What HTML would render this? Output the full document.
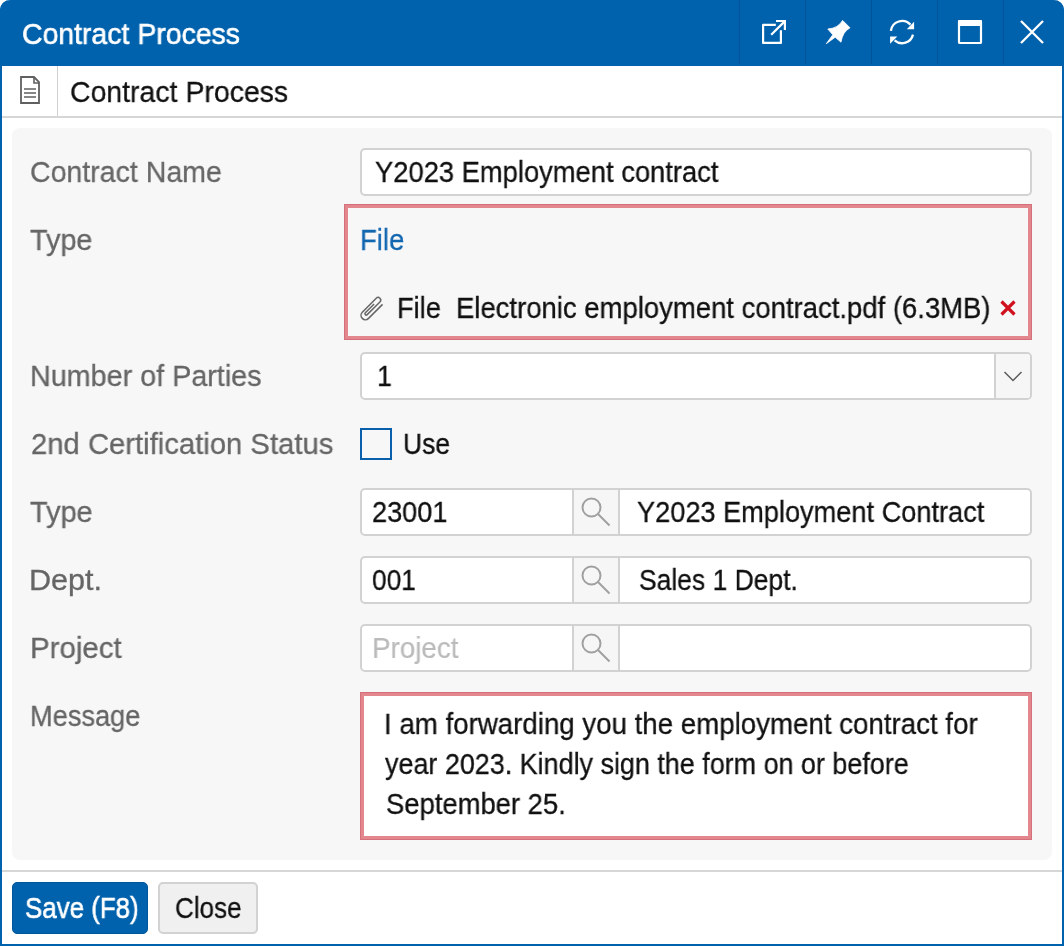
<!DOCTYPE html>
<html><head><meta charset="utf-8">
<style>
html,body{margin:0;padding:0;width:1064px;height:946px;overflow:hidden;background:#fff;}
body{font-family:"Liberation Sans",sans-serif;position:relative;}
.win{position:absolute;left:0;top:0;width:1060px;height:944px;border:2px solid #0062ad;border-top:0;border-radius:10px 10px 0 0;background:#fff;}
.hdr{position:absolute;left:0;top:0;width:1064px;height:66px;background:#0062ad;border-radius:10px 10px 0 0;}
.sep{position:absolute;top:0;width:1.5px;height:64px;background:#00559a;}
.t{position:absolute;white-space:pre;font-size:30px;line-height:40px;height:40px;transform-origin:0 0;will-change:transform;}
.lbl{color:#666;-webkit-text-stroke:0.3px #666;}
.val{color:#111;-webkit-text-stroke:0.3px #111;}
.box{position:absolute;box-sizing:border-box;border:2px solid #d2d2d2;border-radius:5px;background:#fff;}
.pink{position:absolute;box-sizing:border-box;border:4px solid #e3868e;outline:1px solid #d4707b;outline-offset:-1px;}
.panel{position:absolute;left:12px;top:128px;width:1040px;height:732px;background:#f7f7f7;border-radius:8px;}
.vl{position:absolute;background:#d2d2d2;}
svg{position:absolute;overflow:visible;}
</style></head>
<body>
<div class="win"></div>
<div class="hdr"></div>
<div class="sep" style="left:738.5px"></div>
<div class="sep" style="left:804.5px"></div>
<div class="sep" style="left:870.5px"></div>
<div class="sep" style="left:936.5px"></div>
<div class="sep" style="left:1002.5px"></div>
<div id="hdrt" class="t" style="-webkit-text-stroke:0.6px #fff;left:22.05px;top:14px;color:#fff;transform:scaleX(0.9474);">Contract Process</div>

<!-- header icons -->
<svg style="left:0;top:0" width="1064" height="66">
  <g fill="none" stroke="#fff" stroke-width="2.2" stroke-linejoin="round">
    <path d="M775.8 24.9 H763.1 V42.9 H780.9 V30.3"/>
    <path d="M771.2 34.8 L784.4 21.6"/>
  </g>
  <path d="M776 21 H784.9 V30" fill="none" stroke="#fff" stroke-width="2.2"/>
  <path fill="#fff" stroke="#fff" stroke-width="0.8" stroke-linejoin="round" d="M842.6 20.4 L850 27.8 Q842.6 31.8 841 42.2 L835.2 37.2 L826.3 43.7 L832.8 34.8 L827.8 29 Q838.2 28.2 842.6 20.4 Z"/>
  <g fill="none" stroke="#fff" stroke-width="2.3">
    <path d="M890.9 30.8 A11.3 11.3 0 0 1 910.4 24.6"/>
    <path d="M913 34.6 A11.3 11.3 0 0 1 894.6 40.4"/>
  </g>
  <path fill="#fff" d="M906.8 29.2 H914.1 V21.8 Z M890.1 36.4 H897.3 L890.1 43.8 Z"/>
  <rect x="959" y="21" width="22" height="22" rx="0.8" fill="none" stroke="#fff" stroke-width="2.2"/>
  <rect x="958" y="20" width="24" height="6" rx="1" fill="#fff"/>
  <path d="M1021 21 L1043 43 M1043 21 L1021 43" stroke="#fff" stroke-width="2.3"/>
</svg>

<!-- second row -->
<div class="vl" style="left:56.5px;top:66px;width:1.5px;height:51px;background:#d0d0d0"></div>
<div class="vl" style="left:2px;top:116px;width:1060px;height:2px;background:#d6d6d6"></div>
<svg style="left:0;top:0" width="80" height="120">
  <path d="M21 77 H34 L39 82 V103 H21 Z" fill="none" stroke="#606060" stroke-width="1.8"/>
  <path d="M34 77 V83 H39" fill="none" stroke="#606060" stroke-width="1.6"/>
  <path d="M24 89 H36 M24 93 H36 M24 97 H36" stroke="#606060" stroke-width="1.6"/>
</svg>
<div id="sub" class="t val" style="left:70.05px;top:72px;transform:scaleX(0.9482);">Contract Process</div>

<div class="panel"></div>

<!-- labels -->
<div id="l1" class="t lbl" style="left:30.45px;top:152px;transform:scaleX(0.9510);">Contract Name</div>
<div id="l2" class="t lbl" style="left:30.34px;top:220px;transform:scaleX(0.9603);">Type</div>
<div id="l3" class="t lbl" style="left:29.58px;top:356px;transform:scaleX(0.9577);">Number of Parties</div>
<div id="l4" class="t lbl" style="left:30.53px;top:424px;transform:scaleX(0.9747);">2nd Certification Status</div>
<div id="l5" class="t lbl" style="left:30.14px;top:492px;transform:scaleX(0.9635);">Type</div>
<div id="l6" class="t lbl" style="left:29.46px;top:560px;transform:scaleX(1.0194);">Dept.</div>
<div id="l7" class="t lbl" style="left:29.54px;top:628px;transform:scaleX(0.9824);">Project</div>
<div id="l8" class="t lbl" style="left:29.69px;top:696px;transform:scaleX(0.9067);">Message</div>

<!-- contract name -->
<div class="box" style="left:360px;top:148px;width:672px;height:48px;"></div>
<div id="v1" class="t val" style="left:375.29px;top:152px;transform:scaleX(0.9114);">Y2023 Employment contract</div>

<!-- type file -->
<div class="pink" style="left:344px;top:204px;width:688px;height:136px;"></div>
<div id="vfile" class="t" style="-webkit-text-stroke:0.3px #1166b0;left:360.47px;top:220px;color:#1166b0;transform:scaleX(0.9156);">File</div>
<svg style="left:0;top:0" width="400" height="340">
  <path transform="translate(372 308) rotate(-45)" d="M10 4.9 H-9.8 A4.4 4.4 0 0 1 -9.8 -3.9 H9.9 A2.6 2.6 0 0 1 9.9 1.3 H-8.1 A1.3 1.3 0 0 1 -8.1 -1.3 H4.3" fill="none" stroke="#666" stroke-width="1.5"/>
</svg>
<div id="vatt" class="t val" style="left:396.69px;top:288px;transform:scaleX(0.9067);">File</div>
<div id="vname" class="t val" style="left:456.17px;top:288px;transform:scaleX(0.9160);">Electronic employment contract.pdf (6.3MB)</div>
<svg style="left:0;top:0" width="1064" height="340">
  <path d="M1001.5 301.5 L1014.5 314.5 M1014.5 301.5 L1001.5 314.5" stroke="#d0121f" stroke-width="3.2"/>
</svg>

<!-- number of parties select -->
<div class="box" style="left:360px;top:352px;width:672px;height:48px;"></div>
<div class="vl" style="left:994px;top:354px;width:2px;height:44px;"></div>
<div style="position:absolute;left:996px;top:354px;width:34px;height:44px;background:#f6f6f6;border-radius:0 3px 3px 0"></div>
<svg style="left:0;top:0" width="1064" height="400">
  <path d="M1004.5 372 L1013 380.5 L1021.5 372" fill="none" stroke="#5c5c5c" stroke-width="1.5"/>
</svg>
<div id="vone" class="t val" style="left:376.62px;top:356px;transform:scaleX(0.8923);">1</div>

<!-- checkbox -->
<div style="position:absolute;left:360px;top:428px;width:32px;height:32px;box-sizing:border-box;border:2px solid #0a5fad;"></div>
<div id="vuse" class="t val" style="left:402.74px;top:424px;transform:scaleX(0.8800);">Use</div>

<!-- lookup rows -->
<div class="box" style="left:360px;top:488px;width:672px;height:48px;"></div>
<div class="vl" style="left:572px;top:490px;width:2px;height:44px;"></div>
<div style="position:absolute;left:574px;top:490px;width:44px;height:44px;background:#f6f6f6"></div>
<div class="vl" style="left:618px;top:490px;width:2px;height:44px;"></div>
<div id="c1" class="t val" style="left:372.10px;top:492px;transform:scaleX(0.9049);">23001</div>
<div id="c1n" class="t val" style="left:637.39px;top:492px;transform:scaleX(0.9055);">Y2023 Employment Contract</div>

<div class="box" style="left:360px;top:556px;width:672px;height:48px;"></div>
<div class="vl" style="left:572px;top:558px;width:2px;height:44px;"></div>
<div style="position:absolute;left:574px;top:558px;width:44px;height:44px;background:#f6f6f6"></div>
<div class="vl" style="left:618px;top:558px;width:2px;height:44px;"></div>
<div id="c2" class="t val" style="left:372.22px;top:560px;transform:scaleX(0.8771);">001</div>
<div id="c2n" class="t val" style="left:638.62px;top:560px;transform:scaleX(0.8819);">Sales 1 Dept.</div>

<div class="box" style="left:360px;top:624px;width:672px;height:48px;"></div>
<div class="vl" style="left:572px;top:626px;width:2px;height:44px;"></div>
<div style="position:absolute;left:574px;top:626px;width:44px;height:44px;background:#f6f6f6"></div>
<div class="vl" style="left:618px;top:626px;width:2px;height:44px;"></div>
<div id="c3" class="t" style="-webkit-text-stroke:0.2px #bbb;left:372.45px;top:628px;color:#bbb;transform:scaleX(0.9264);">Project</div>

<svg style="left:0;top:0" width="1064" height="700">
  <g fill="none" stroke="#a0a0a0" stroke-width="2">
    <circle cx="591.5" cy="507.5" r="9"/><path d="M598 514 L609.5 525.5"/>
    <circle cx="591.5" cy="575.5" r="9"/><path d="M598 582 L609.5 593.5"/>
    <circle cx="591.5" cy="643.5" r="9"/><path d="M598 650 L609.5 661.5"/>
  </g>
</svg>

<!-- message -->
<div class="pink" style="left:360px;top:692px;width:672px;height:148px;background:#fff;"></div>
<div id="m1" class="t val" style="left:383.73px;top:704px;transform:scaleX(0.9223);">I am forwarding you the employment contract for</div>
<div id="m2" class="t val" style="left:385.00px;top:744px;transform:scaleX(0.8973);">year 2023. Kindly sign the form on or before</div>
<div id="m3" class="t val" style="left:385.59px;top:784px;transform:scaleX(0.9135);">September 25.</div>

<!-- footer -->
<div class="vl" style="left:2px;top:870px;width:1060px;height:2px;background:#d6d6d6"></div>
<div style="position:absolute;left:12px;top:882px;width:136px;height:52px;box-sizing:border-box;background:#0062ad;border:1px solid #00569a;border-radius:5px;"></div>
<div id="save" class="t" style="-webkit-text-stroke:0.6px #fff;left:24.54px;top:888px;color:#fff;transform:scaleX(0.8628);">Save (F8)</div>
<div style="position:absolute;left:158px;top:882px;width:100px;height:52px;box-sizing:border-box;background:#f0f0f0;border:2px solid #d2d2d2;border-radius:5px;"></div>
<div id="close" class="t val" style="left:174.53px;top:888px;transform:scaleX(0.8680);">Close</div>

</body></html>
